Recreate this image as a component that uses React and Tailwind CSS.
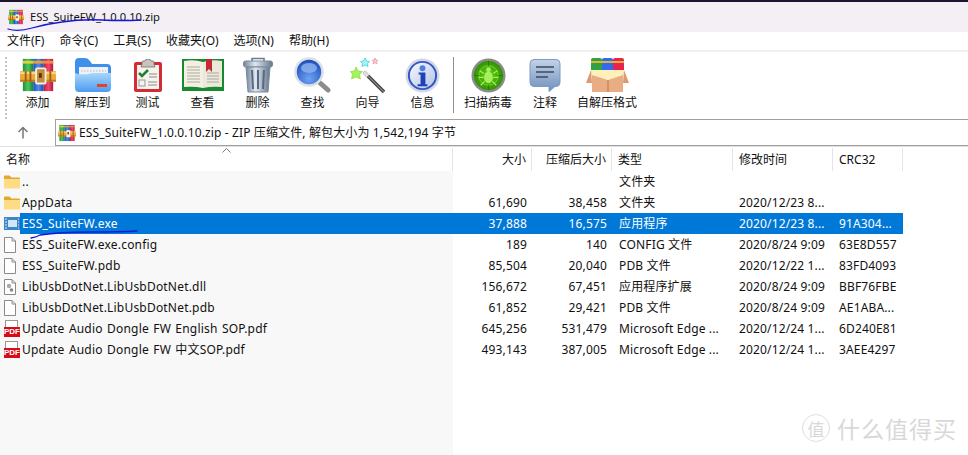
import React, { useId } from "react";

const latin = "font-['Noto_Sans','Noto_Sans_CJK_SC',sans-serif]";

const RarIcon = ({ size = 36 }) => {
  const id = useId();
  const small = size < 20;
  return (
    <svg width={size} height={size} viewBox="0 0 38 36">
      <defs>
        <linearGradient id={`${id}g`} x1="0" y1="0" x2="1" y2="0">
          <stop offset="0" stopColor="#1f8f3c" />
          <stop offset="0.5" stopColor="#4cc85c" />
          <stop offset="1" stopColor="#17803a" />
        </linearGradient>
        <linearGradient id={`${id}b`} x1="0" y1="0" x2="1" y2="0">
          <stop offset="0" stopColor="#1f4fb8" />
          <stop offset="0.5" stopColor="#4f8fef" />
          <stop offset="1" stopColor="#1d45a8" />
        </linearGradient>
        <linearGradient id={`${id}r`} x1="0" y1="0" x2="1" y2="0">
          <stop offset="0" stopColor="#c01d3c" />
          <stop offset="0.5" stopColor="#f2476f" />
          <stop offset="1" stopColor="#b4183a" />
        </linearGradient>
      </defs>
      <rect x="3" y="1" width="11" height="34" fill={`url(#${id}g)`} />
      <rect x="14" y="1" width="11" height="34" fill={`url(#${id}b)`} />
      <rect x="25" y="1" width="10" height="34" fill={`url(#${id}r)`} />
      <rect x="3" y="3" width="11" height="3" fill="#e0d040" />
      <rect x="14" y="3" width="11" height="3" fill="#e8a030" />
      <rect x="25" y="3" width="10" height="3" fill="#f08a50" />
      <rect x="0" y="14" width="38" height="11" fill="#eea93a" />
      <rect x="0" y="15" width="38" height="2" fill="#f9d98a" />
      <rect x="0" y="23" width="38" height="2" fill="#c07a20" />
      <rect x="5" y="14" width="2" height="11" fill="#9a6216" />
      <rect x="10" y="14" width="2" height="11" fill="#9a6216" />
      {small ? (
        <rect x="18" y="12" width="8" height="15" fill="#fff6e0" />
      ) : (
        <rect x="17" y="11" width="10" height="16" rx="1" fill="#c58a3a" stroke="#f4eee0" strokeWidth="2" />
      )}
      <rect x="20" y="16" width="3" height="5" fill="#5a3510" />
      <rect x="31" y="14" width="2" height="11" fill="#9a6216" />
    </svg>
  );
};

const FolderOpenIcon = () => (
  <svg width="36" height="34" viewBox="0 0 36 34">
    <defs>
      <linearGradient id="fo" x1="0" y1="0" x2="0" y2="1">
        <stop offset="0" stopColor="#a8d6fb" />
        <stop offset="1" stopColor="#4c9cf0" />
      </linearGradient>
    </defs>
    <path d="M0 4q0-4 4-4h6q3 0 5 3l2 3h15q4 0 4 4v8H0z" fill="#3f90ea" />
    <rect x="4" y="9" width="29" height="14" fill="#eef2f6" />
    <path d="M6 13h25M6 17h25" stroke="#aebccb" strokeDasharray="1.500 1.500" />
    <path d="M0 15q8 3 17 0h19v15q0 4-4 4H4q-4 0-4-4z" fill="url(#fo)" />
    <rect x="22" y="26" width="10" height="3" fill="#e5402a" />
  </svg>
);

const TestIcon = () => (
  <svg width="28" height="33" viewBox="0 0 28 33">
    <rect x="0" y="3" width="28" height="30" rx="2" fill="#d42c36" />
    <rect x="3" y="6" width="22" height="24" fill="#f5f3ec" />
    <path d="M8 5V3q0-1 1-1h2q0-2 3-2t3 2h2q1 0 1 1v2l1 3H7z" fill="#c9c4bb" stroke="#6e6e6e" strokeWidth="0.800" />
    <path d="M5 14l3 3 6-6" fill="none" stroke="#1f7f34" strokeWidth="2.600" />
    <rect x="5" y="21" width="6" height="6" fill="none" stroke="#999" />
    <path d="M15 15h8M15 18h8M14 23h9M14 26h9" stroke="#8a8a8a" />
  </svg>
);

const BookIcon = () => (
  <svg width="42" height="32" viewBox="0 0 42 32">
    <path d="M0 0h42v32H0z" fill="#17892e" />
    <path d="M2 2q10-2 19 1v26q-9-2-19-1z" fill="#f3f0e3" />
    <path d="M40 2q-10-2-19 1v26q9-2 19-1z" fill="#ece9db" />
    <path d="M5 8h13M5 11h13M5 14h13M5 17h13M5 20h13M5 23h13M25 14h12M25 17h12M25 20h12M25 23h12" stroke="#aaa99d" />
    <path d="M24 0h6v13l-3-3-3 3z" fill="#c52a33" />
  </svg>
);

const TrashIcon = () => (
  <svg width="30" height="36" viewBox="0 0 30 36">
    <defs>
      <linearGradient id="tr" x1="0" y1="0" x2="1" y2="0">
        <stop offset="0" stopColor="#71839a" />
        <stop offset="0.4" stopColor="#dfe8f1" />
        <stop offset="1" stopColor="#64768c" />
      </linearGradient>
    </defs>
    <path d="M9 5V1.500h12V5" fill="none" stroke="#6e7c8c" strokeWidth="1.600" />
    <rect x="0.500" y="4" width="29" height="6" rx="2" fill="url(#tr)" stroke="#7a8a9c" />
    <path d="M3 10h24l-2 25H5z" fill="url(#tr)" stroke="#7a8a9c" />
    <path d="M9 13l1 19M15 13v19M21 13l-1 19" stroke="#5a6a7e" strokeWidth="2" />
  </svg>
);

const SearchIcon = () => (
  <svg width="37" height="36" viewBox="0 0 37 36">
    <defs>
      <radialGradient id="se" cx="0.5" cy="0.75" r="0.75">
        <stop offset="0" stopColor="#6ea4f2" />
        <stop offset="1" stopColor="#1646b8" />
      </radialGradient>
    </defs>
    <path d="M25 25l9 8" stroke="#8a8c90" strokeWidth="5" strokeLinecap="round" />
    <circle cx="15" cy="15" r="13.500" fill="url(#se)" stroke="#dbe0e6" strokeWidth="2.500" />
    <ellipse cx="15" cy="11" rx="8" ry="5" fill="#8fb4ee" opacity="0.800" />
  </svg>
);

const WizardIcon = () => (
  <svg width="36" height="35" viewBox="0 0 36 35">
    <path d="M14 14l20 20" stroke="#3a3a3a" strokeWidth="3.500" />
    <path d="M18 18l16 16" stroke="#8a8a8a" strokeWidth="1.200" />
    <path d="M14 14l4 4" stroke="#e0e0e0" strokeWidth="3.500" />
    <path d="M6 9l2 4 4.500.5-3 3 1 4.500-4.500-2-4.500 2 1-4.500-2-3 4-.5z" fill="#a5f25a" stroke="#72d632" strokeWidth="0.600" />
    <path d="M15 0l1.500 3 3 .5-2 2 .5 3-3-1.500-3 1.500 .5-3-2-2 3-.5z" fill="#a6f5f5" stroke="#2fc7dc" strokeWidth="0.700" />
    <path d="M25 0l1 2 2 .3-1.500 1.500 .5 2-2-1-2 1 .5-2L22 2.300 24 2z" fill="#f7c9cf" stroke="#e9929e" strokeWidth="0.700" />
  </svg>
);

const InfoIcon = () => (
  <svg width="35" height="35" viewBox="0 0 36 36">
    <defs>
      <linearGradient id="in" x1="0" y1="0" x2="1" y2="1">
        <stop offset="0" stopColor="#f8f9fd" />
        <stop offset="1" stopColor="#b4c2e6" />
      </linearGradient>
    </defs>
    <circle cx="18" cy="18" r="17.500" fill="#d3d8e2" />
    <circle cx="18" cy="18" r="14" fill="url(#in)" stroke="#2f55c8" strokeWidth="2" />
    <circle cx="18" cy="10.500" r="3" fill="#4a80e8" />
    <path d="M14 15h7v12h2v2H13v-2h3V17h-2z" fill="#1f40b8" />
  </svg>
);

const ScanIcon = () => (
  <svg width="35" height="35" viewBox="0 0 36 36">
    <defs>
      <radialGradient id="sc" cx="0.5" cy="0.5" r="0.55">
        <stop offset="0" stopColor="#62d412" />
        <stop offset="1" stopColor="#2e8a06" />
      </radialGradient>
    </defs>
    <circle cx="18" cy="18" r="17.500" fill="#8a8c88" />
    <circle cx="18" cy="18" r="15" fill="url(#sc)" />
    <circle cx="18" cy="18" r="10" fill="none" stroke="#6fd42a" />
    <path d="M18 3v5M18 28v5M3 18h5M28 18h5" stroke="#2a7a06" />
    <ellipse cx="18" cy="20" rx="4.500" ry="6" fill="#a8ef60" />
    <circle cx="18" cy="12" r="2.500" fill="#a8ef60" />
    <path d="M13 16l-4-3M23 16l4-3M13 20H8M23 20h5M14 24l-4 4M22 24l4 4" stroke="#a8ef60" strokeWidth="1.300" />
  </svg>
);

const CommentIcon = () => (
  <svg width="32" height="33" viewBox="0 0 32 33">
    <defs>
      <linearGradient id="co" x1="0" y1="0" x2="0" y2="1">
        <stop offset="0" stopColor="#c3d3e8" />
        <stop offset="1" stopColor="#6f8fbd" />
      </linearGradient>
    </defs>
    <path d="M5 .500h22q4 0 4 4v19q0 4-4 4h-1l-6 5v-5H5q-4 0-4-4v-19q0-4 4-4z" fill="url(#co)" stroke="#7f9ac0" />
    <path d="M7 8h18M7 13h18M7 18h12" stroke="#3f4a5c" strokeWidth="1.700" />
  </svg>
);

const SfxIcon = () => (
  <svg width="43" height="34" viewBox="0 0 43 34">
    <rect x="5" y="0" width="11" height="16" rx="2" fill="#2fa344" />
    <rect x="16" y="0" width="11" height="16" rx="2" fill="#2f6bea" />
    <rect x="27" y="0" width="11" height="16" rx="2" fill="#e52450" />
    <rect x="5" y="3" width="33" height="2" fill="#e8b030" />
    <path d="M5 12h33v5l-16 5-17-5z" fill="#fdf0bb" />
    <path d="M5 12L0 25h6zM38 12l5 13h-6z" fill="#dc9a6e" />
    <path d="M6 17l16 5 15-5v17H6z" fill="#e8ad82" />
    <path d="M22 22v12" stroke="#b9784c" />
  </svg>
);

const FolderIcon = () => (
  <svg width="16" height="14" viewBox="0 0 16 14">
    <path d="M0 1.500Q0 .5 1 .5h4.500L7.500 2.500H15q1 0 1 1V5H0z" fill="#e3a82f" />
    <path d="M0 4h16v8.500q0 1-1 1H1q-1 0-1-1z" fill="#fcdc85" />
  </svg>
);

const ExeIcon = () => (
  <svg width="16" height="13" viewBox="0 0 16 13">
    <rect x="0" y="0" width="16" height="13" fill="#3f86c8" />
    <rect x="4" y="3" width="9" height="7" fill="#cfe8f8" />
    <path d="M1 2h2M1 5h2M1 8h2M1 11h2M14 2h1M14 5h1M14 8h1M14 11h1" stroke="#d8ecfa" />
  </svg>
);

const FileIcon = ({ gear }) => (
  <svg width="12" height="16" viewBox="0 0 12 16">
    <path d="M.5.500h7.500l3.500 3.500v11.500H.5z" fill="#fff" stroke="#8a8a8a" />
    <path d="M8 .500V4h3.500" fill="none" stroke="#8a8a8a" />
    {gear && <circle cx="5" cy="7" r="2.200" fill="#a5acb5" />}
    {gear && <circle cx="7.500" cy="11" r="1.800" fill="#7f8893" />}
  </svg>
);

const PdfIcon = () => (
  <span className="relative block h-[17px] w-[16px]">
    <span className="absolute left-[1px] top-0 h-[10px] w-[13px] border border-[#999] bg-white" />
    <span className="absolute bottom-0 left-0 flex h-[10px] w-[16px] items-center justify-center bg-[#d80c18] font-['Liberation_Sans',sans-serif] text-[8px] font-bold leading-none tracking-normal text-white">
      PDF
    </span>
  </span>
);

const tools = [
  { label: "添加", w: "w-[55px]", icon: <RarIcon /> },
  { label: "解压到", w: "w-[55px]", icon: <FolderOpenIcon /> },
  { label: "测试", w: "w-[55px]", icon: <TestIcon /> },
  { label: "查看", w: "w-[55px]", icon: <BookIcon /> },
  { label: "删除", w: "w-[55px]", icon: <TrashIcon /> },
  { label: "查找", w: "w-[55px]", icon: <SearchIcon /> },
  { label: "向导", w: "w-[55px]", icon: <WizardIcon /> },
  { label: "信息", w: "w-[55px]", icon: <InfoIcon /> },
];

const tools2 = [
  { label: "扫描病毒", w: "w-[62px]", icon: <ScanIcon /> },
  { label: "注释", w: "w-[52px]", icon: <CommentIcon /> },
  { label: "自解压格式", w: "w-[72px]", icon: <SfxIcon /> },
];

const menus = ["文件(F)", "命令(C)", "工具(S)", "收藏夹(O)", "选项(N)", "帮助(H)"];

const rows = [
  { icon: <FolderIcon />, name: "..", type: "文件夹" },
  { icon: <FolderIcon />, name: "AppData", size: "61,690", packed: "38,458", type: "文件夹", time: "2020/12/23 8..." },
  { icon: <ExeIcon />, name: "ESS_SuiteFW.exe", size: "37,888", packed: "16,575", type: "应用程序", time: "2020/12/23 8...", crc: "91A304...", selected: true },
  { icon: <FileIcon />, name: "ESS_SuiteFW.exe.config", size: "189", packed: "140", type: "CONFIG 文件", time: "2020/8/24 9:09", crc: "63E8D557" },
  { icon: <FileIcon />, name: "ESS_SuiteFW.pdb", size: "85,504", packed: "20,040", type: "PDB 文件", time: "2020/12/22 1...", crc: "83FD4093" },
  { icon: <FileIcon gear />, name: "LibUsbDotNet.LibUsbDotNet.dll", size: "156,672", packed: "67,451", type: "应用程序扩展", time: "2020/8/24 9:09", crc: "BBF76FBE" },
  { icon: <FileIcon />, name: "LibUsbDotNet.LibUsbDotNet.pdb", size: "61,852", packed: "29,421", type: "PDB 文件", time: "2020/8/24 9:09", crc: "AE1ABA..." },
  { icon: <PdfIcon />, name: "Update Audio Dongle FW English SOP.pdf", size: "645,256", packed: "531,479", type: "Microsoft Edge ...", time: "2020/12/24 1...", crc: "6D240E81" },
  { icon: <PdfIcon />, name: "Update Audio Dongle FW 中文SOP.pdf", size: "493,143", packed: "387,005", type: "Microsoft Edge ...", time: "2020/12/24 1...", crc: "3AEE4297" },
];

const ToolButton = ({ tool }) => (
  <div className={`flex shrink-0 flex-col items-center ${tool.w}`}>
    <div className="flex h-[36px] items-center justify-center">{tool.icon}</div>
    <span className="mt-[1px] whitespace-nowrap text-[12px] leading-[17px]">{tool.label}</span>
  </div>
);

const HeaderCell = ({ className, children }) => (
  <div className={`flex h-full shrink-0 items-center border-r border-[#e5e5e5] ${className}`}>{children}</div>
);

export default function App() {
  return (
    <div className={`relative flex h-[455px] w-[968px] flex-col overflow-hidden bg-white text-[12px] text-[#111] ${latin}`}>
      <div className="h-[2px] shrink-0 bg-[#1c1530]" />

      {/* title */}
      <div className="flex h-[30px] shrink-0 items-center gap-[6px] bg-[#f4eff5] pl-[8px]">
        <RarIcon size={16} />
        <span className="text-[11.200px]">ESS_SuiteFW_1.0.0.10.zip</span>
      </div>

      {/* menu */}
      <div className="flex h-[18px] shrink-0 items-center gap-[15px] pl-[7px] text-[12px]">
        {menus.map((m) => (
          <span key={m}>{m}</span>
        ))}
      </div>

      {/* toolbar */}
      <div className="flex h-[69px] shrink-0 items-start border-t-2 border-[#f0f0f0] pl-[10px] pt-[5px]">
        <div className="h-[62px] w-[2px] shrink-0 -translate-x-[5px] border-l-2 border-dotted border-[#c4c4c4]" />
        <div className="-ml-[2px] flex">
          {tools.map((t) => (
            <ToolButton key={t.label} tool={t} />
          ))}
        </div>
        <div className="mx-[3px] h-[56px] w-px shrink-0 bg-[#8f8f8f]" />
        <div className="flex">
          {tools2.map((t) => (
            <ToolButton key={t.label} tool={t} />
          ))}
        </div>
      </div>

      {/* address */}
      <div className="flex h-[27px] shrink-0 items-stretch">
        <div className="flex w-[55px] shrink-0 items-center justify-center pr-[10px]">
          <svg width="12" height="13" viewBox="0 0 12 13" fill="none" stroke="#777" strokeWidth="1.500">
            <path d="M6 12.500V1.500M1.500 6L6 1.500 10.500 6" />
          </svg>
        </div>
        <div className="flex flex-1 items-center gap-[3px] border-y border-l border-[#a0a0a0] pl-[2px]">
          <RarIcon size={18} />
          <span className="whitespace-nowrap tracking-[0.13px]">ESS_SuiteFW_1.0.0.10.zip - ZIP 压缩文件, 解包大小为 1,542,194 字节</span>
        </div>
      </div>

      {/* header */}
      <div className="flex h-[25px] shrink-0 items-center border-t border-[#e0e0e0] pt-[1px]">
        <HeaderCell className="relative w-[453px] pl-[6px]">
          名称
          <svg className="absolute left-[222px] top-[0px]" width="9" height="5" viewBox="0 0 9 5" fill="none" stroke="#777">
            <path d="M.5 4.500L4.500.5l4 4" />
          </svg>
        </HeaderCell>
        <HeaderCell className="w-[79px] justify-end pr-[5px]">大小</HeaderCell>
        <HeaderCell className="w-[80px] justify-end pr-[5px]">压缩后大小</HeaderCell>
        <HeaderCell className="w-[121px] pl-[6px]">类型</HeaderCell>
        <HeaderCell className="w-[100px] pl-[6px]">修改时间</HeaderCell>
        <HeaderCell className="w-[70px] pl-[6px]">CRC32</HeaderCell>
      </div>

      {/* rows */}
      <div className="flex flex-1 flex-col">
        {rows.map((r) => (
          <div key={r.name} className="flex h-[21px] shrink-0 items-center tracking-[0.15px]">
            <div className="flex h-full w-[20px] shrink-0 items-center justify-start bg-[#f8f8f8] pl-[4px]">{r.icon}</div>
            <div className={`flex h-full w-[433px] shrink-0 items-center pl-[2px] ${r.selected ? "bg-[#0078d7] text-white" : "bg-[#f8f8f8]"}`}>
              <span className="whitespace-nowrap tracking-[0.2px] [word-spacing:1px]">{r.name}</span>
            </div>
            <div className={`flex h-full w-[450px] shrink-0 items-center ${r.selected ? "bg-[#0078d7] text-white" : ""}`}>
              <span className="w-[74px] shrink-0 text-right">{r.size}</span>
              <span className="w-[80px] shrink-0 text-right">{r.packed}</span>
              <span className="w-[132px] shrink-0 whitespace-nowrap pl-[12px]">{r.type}</span>
              <span className="w-[100px] shrink-0 whitespace-nowrap">{r.time}</span>
              <span className="w-[64px] shrink-0 whitespace-nowrap">{r.crc}</span>
            </div>
          </div>
        ))}
        <div className="w-[453px] flex-1 bg-[#f8f8f8]" />
      </div>

      {/* pen marks drawn on the screenshot */}
      <svg className="pointer-events-none absolute left-0 top-0" width="968" height="455" fill="none" stroke="#1616d8" strokeWidth="1.300" strokeLinecap="round">
        <path d="M8 29q10 3 24-1t30-6q20-3 40-2t39 0" />
        <path d="M31 238q6-1 9-3 20-3 50-3t47-1" />
      </svg>

      {/* watermark */}
      <div className="pointer-events-none absolute left-[802px] top-[414px] flex items-center gap-[7px] font-['Noto_Sans_CJK_SC',sans-serif] text-[#d8d8d8]">
        <span className="flex h-[28px] w-[28px] items-center justify-center rounded-full border border-[#dedede] text-[17px] leading-none">值</span>
        <span className="text-[23px] leading-none tracking-[1px]">什么值得买</span>
      </div>
    </div>
  );
}
